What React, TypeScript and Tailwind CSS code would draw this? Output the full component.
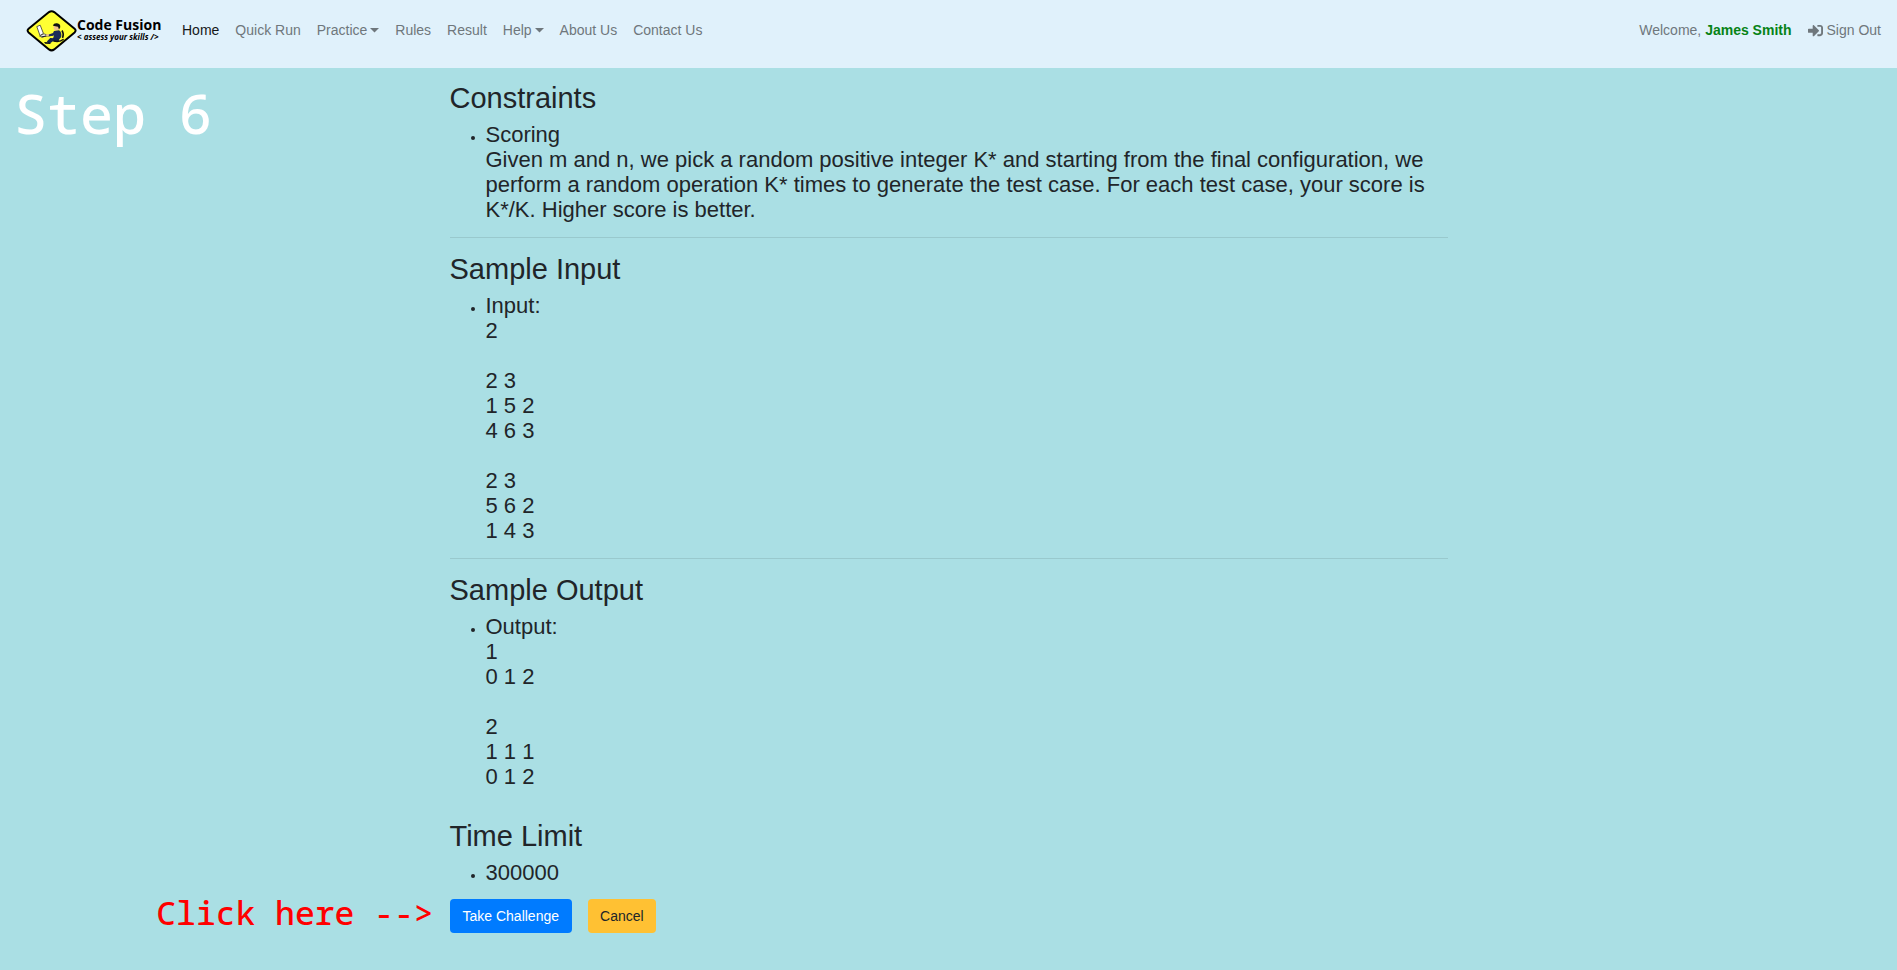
import React from "react";
import { FaSignInAlt } from "react-icons/fa";

const navItems = [
  { label: "Home", active: true },
  { label: "Quick Run" },
  { label: "Practice", menu: true },
  { label: "Rules" },
  { label: "Result" },
  { label: "Help", menu: true },
  { label: "About Us" },
  { label: "Contact Us" },
];

const constraints =
  "Scoring\nGiven m and n, we pick a random positive integer K* and starting from the final configuration, we perform a random operation K* times to generate the test case. For each test case, your score is K*/K. Higher score is better.";
const sampleInput = "Input:\n2\n\n2 3\n1 5 2\n4 6 3\n\n2 3\n5 6 2\n1 4 3";
const sampleOutput = "Output:\n1\n0 1 2\n\n2\n1 1 1\n0 1 2";

function Logo() {
  return (
    <a href="#" className="flex items-center text-black" aria-label="Code Fusion">
      <svg width="51" height="42" viewBox="0 0 51 42" aria-hidden="true">
        <path
          d="M23 2.1 Q25.6 0.2 28.2 2.1 L48.6 18.8 Q50.6 20.6 48.6 22.4 L28.2 39.4 Q25.6 41.4 23 39.4 L2.6 22.4 Q0.6 20.6 2.6 18.8 Z"
          fill="#ffff33"
          stroke="#000"
          strokeWidth="2"
        />
        <path d="M10.8 16.6 L14.2 15.2 L17.4 23.4 L14 25.6 Z" fill="#fff" stroke="#333" strokeWidth="0.8" />
        <path d="M13.5 26 L18 23.8 L21.4 25.2 L16.4 27.4 Z" fill="#eee" stroke="#333" strokeWidth="0.7" />
        <path d="M15.5 26.8 L27 25" stroke="#111" strokeWidth="0.9" />
        <circle cx="30.6" cy="17.4" r="3" fill="#f2c28b" />
        <path d="M26.8 15.6 Q27.8 12.8 31 13.2 Q34.8 13.6 34.2 17.4 L33 19.4 L32 16.8 L28.2 16 Z" fill="#111" />
        <path d="M28 21 L33 20.2 Q36 21.8 35.2 27 L32.6 30.2 L26.8 29 L28 25.6 L22.5 26.4 L22 24.8 L27 23 Z" fill="#1b2c58" />
        <path d="M20 24.4 L22.8 24 L22.8 26.2 L20.2 26.2 Z" fill="#f2c28b" />
        <path d="M32.6 28.6 L24.2 28 L20.8 31.6 L23.4 33.8 L27 31.2 L33 31.2 Z" fill="#15254d" />
        <path d="M18 32 L22.6 32.2 L25.2 34 L19.2 33.8 Z" fill="#111" />
        <path d="M36 20.5 Q38.2 24 36.6 28 M27.5 31 Q34 32.4 37.6 29.2" fill="none" stroke="#111" strokeWidth="1.5" />
      </svg>
      <span className="flex flex-col pb-1 font-['Open_Sans',sans-serif]">
        <span className="text-[14px] leading-[15px] font-bold whitespace-nowrap">Code Fusion</span>
        <span className="text-[8px] leading-[10px] font-bold italic whitespace-nowrap">
          &lt; assess your skills /&gt;
        </span>
      </span>
    </a>
  );
}

function Section({ title, children }: { title: string; children: React.ReactNode }) {
  return (
    <section>
      <h2 className="mb-[7px] text-[29px] leading-[34px]">{title}</h2>
      <ul className="list-disc pl-9">
        <li className="text-sm">
          <span className="block text-[22px] leading-[25px] whitespace-pre-line">{children}</span>
        </li>
      </ul>
    </section>
  );
}

export default function App() {
  return (
    <div className="flex min-h-screen flex-col bg-[#aadfe4] font-['Liberation_Sans',Arial,sans-serif] text-sm text-[#212529]">
      <header className="flex h-[68px] items-start bg-[#e0f1fb] px-4 pt-[10px]">
        <div className="flex w-[158px] shrink-0 pl-2.5">
          <Logo />
        </div>
        <nav className="flex flex-1 pt-[10px] leading-[21px] text-[#6f777c]">
          <ul className="flex">
            {navItems.map((item) => (
              <li key={item.label} className="px-2">
                <a
                  href="#"
                  className={`flex items-center gap-[3px] whitespace-nowrap ${item.active ? "text-[#161819]" : ""}`}
                >
                  {item.label}
                  {item.menu && (
                    <svg width="9" height="5" viewBox="0 0 9 5" aria-hidden="true">
                      <path d="M0 0 H9 L4.5 4.6 Z" fill="currentColor" />
                    </svg>
                  )}
                </a>
              </li>
            ))}
          </ul>
          <div className="ml-auto flex gap-4 whitespace-nowrap">
            <span>
              Welcome, <b className="text-[#078316]">James Smith</b>
            </span>
            <a href="#" className="flex items-center gap-1">
              <FaSignInAlt size={15} />
              Sign Out
            </a>
          </div>
        </nav>
      </header>

      <div className="grid flex-1 grid-cols-[minmax(0,1fr)_minmax(0,998px)_minmax(0,1fr)]">
        <aside className="flex flex-col justify-between pt-[11px] pb-[38px] font-['Noto_Sans_Mono','DejaVu_Sans_Mono',monospace] font-medium">
          <p className="pl-[14px] text-[55px] leading-[68px] whitespace-nowrap text-white">Step 6</p>
          <p className="pr-4 text-right text-[33px] leading-[38px] whitespace-nowrap text-[#ff0000]">
            Click here --&gt;
          </p>
        </aside>
        <main className="pt-[13px] pb-9">
          <Section title="Constraints">{constraints}</Section>
          <hr className="mt-[15px] mb-[14px] border-[#99c9cd]" />
          <Section title="Sample Input">{sampleInput}</Section>
          <hr className="mt-[15px] mb-[14px] border-[#99c9cd]" />
          <Section title="Sample Output">{sampleOutput}</Section>
          <div className="mt-[30px]">
            <Section title="Time Limit">300000</Section>
          </div>
          <div className="mt-[14px] flex gap-4">
            <button type="button" className="h-[34px] rounded bg-[#007bff] px-[13px] text-white">
              Take Challenge
            </button>
            <button type="button" className="h-[34px] rounded bg-[#ffc133] px-[12px] text-[#212529]">
              Cancel
            </button>
          </div>
        </main>
      </div>
    </div>
  );
}
